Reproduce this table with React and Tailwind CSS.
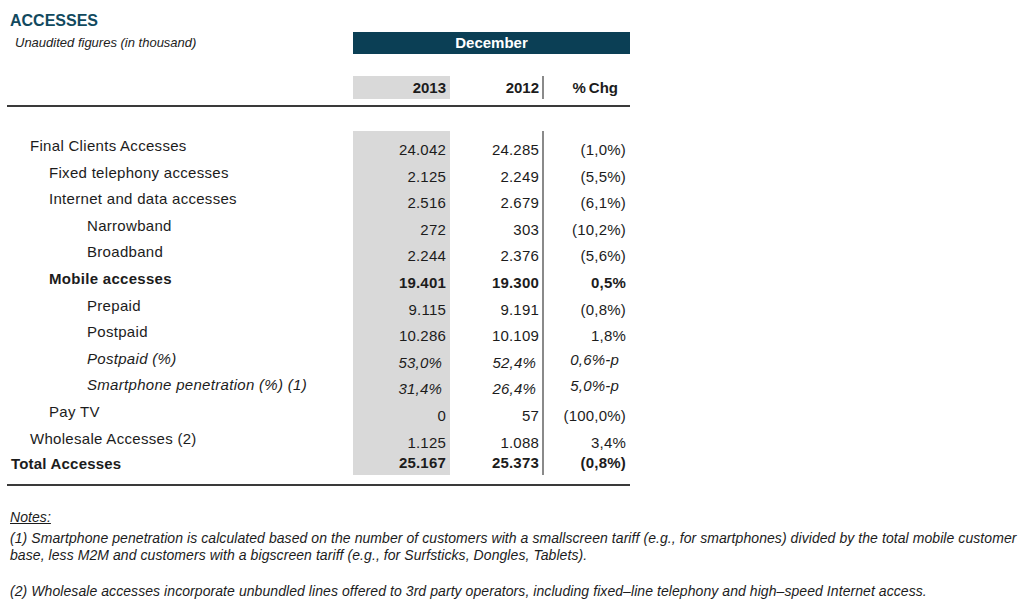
import React from "react";

const rows = [
  { label: "Final Clients Accesses", indent: 1, v: ["24.042", "24.285", "(1,0%)"] },
  { label: "Fixed telephony accesses", indent: 2, v: ["2.125", "2.249", "(5,5%)"] },
  { label: "Internet and data accesses", indent: 2, v: ["2.516", "2.679", "(6,1%)"] },
  { label: "Narrowband", indent: 3, v: ["272", "303", "(10,2%)"] },
  { label: "Broadband", indent: 3, v: ["2.244", "2.376", "(5,6%)"] },
  { label: "Mobile accesses", indent: 2, bold: true, v: ["19.401", "19.300", "0,5%"] },
  { label: "Prepaid", indent: 3, v: ["9.115", "9.191", "(0,8%)"] },
  { label: "Postpaid", indent: 3, v: ["10.286", "10.109", "1,8%"] },
  { label: "Postpaid (%)", indent: 3, italic: true, v: ["53,0%", "52,4%", "0,6%-p"] },
  { label: "Smartphone penetration (%) (1)", indent: 3, italic: true, v: ["31,4%", "26,4%", "5,0%-p"] },
  { label: "Pay TV", indent: 2, v: ["0", "57", "(100,0%)"] },
  { label: "Wholesale Accesses (2)", indent: 1, v: ["1.125", "1.088", "3,4%"] },
];

const indentCls = {
  0: "pl-[4px]",
  1: "pl-[23px]",
  2: "pl-[42px]",
  3: "pl-[80px]",
};

function Row({ r }) {
  const weight = r.bold ? "font-bold" : "font-normal";
  const style = r.italic ? "italic" : "not-italic";
  return (
    <div className="flex h-[26.6px]">
      <div className={`w-[346px] pt-[6px] leading-[18px] tracking-[0.3px] ${indentCls[r.indent]} ${weight} ${style}`}>
        {r.label}
      </div>
      <div
        className={`w-[97px] bg-[#d9d9d9] text-right leading-[18px] ${weight} ${style} ${
          r.italic ? "pt-[10px] pr-[8px]" : "pt-[10px] pr-[4px]"
        }`}
      >
        {r.v[0]}
      </div>
      <div
        className={`w-[94px] border-r-2 border-[#8a8a8a] text-right leading-[18px] ${weight} ${style} ${
          r.italic ? "pt-[10px] pr-[6px]" : "pt-[10px] pr-[3px]"
        }`}
      >
        {r.v[1]}
      </div>
      <div
        className={`w-[86px] text-right leading-[18px] ${weight} ${style} ${
          r.italic ? "pt-[7px] pr-[11px]" : "pt-[10px] pr-[4px]"
        }`}
      >
        {r.v[2]}
      </div>
    </div>
  );
}

export default function App() {
  return (
    <div
      className="w-[1024px] h-[607px] bg-white overflow-hidden text-[#1c1c1c]"
      style={{ fontFamily: '"Liberation Sans", Arial, sans-serif' }}
    >
      <div className="pl-[7px] w-[630px]">
        {/* Title */}
        <div className="pt-[12px] pl-[3px] h-[32px] text-[16px] leading-[18px] font-bold text-[#11495e]">
          ACCESSES
        </div>
        {/* Subtitle + December */}
        <div className="flex h-[22px] items-center">
          <div className="w-[346px] pl-[8px] text-[13px] italic text-[#222]">
            Unaudited figures (in thousand)
          </div>
          <div className="w-[277px] h-[22px] bg-[#0b3f55] text-white font-bold text-[15px] flex items-center justify-center">
            December
          </div>
        </div>
        {/* Header row */}
        <div className="flex h-[23px] mt-[22px] text-[15px] font-bold leading-[23px]">
          <div className="w-[346px]" />
          <div className="w-[97px] bg-[#d9d9d9] text-right pr-[4px]">2013</div>
          <div className="w-[94px] border-r-2 border-[#8a8a8a] text-right pr-[3px]">2012</div>
          <div className="w-[86px] text-right pr-[12px]">%&#8201;Chg</div>
        </div>
        <div className="mt-[6px] h-[2px] bg-[#3a3a3a]" />
        {/* Body */}
        <div className="mt-[24px] text-[15px] tracking-[0.2px]">
          {rows.map((r) => (
            <Row key={r.label} r={r} />
          ))}
          <div className="flex h-[25px] font-bold">
            <div className="w-[346px] pt-[5px] leading-[18px] pl-[4px]">Total Accesses</div>
            <div className="w-[97px] bg-[#d9d9d9] text-right pt-[4px] pr-[4px] leading-[18px]">25.167</div>
            <div className="w-[94px] border-r-2 border-[#8a8a8a] text-right pt-[4px] pr-[3px] leading-[18px]">
              25.373
            </div>
            <div className="w-[86px] text-right pt-[4px] pr-[4px] leading-[18px]">(0,8%)</div>
          </div>
        </div>
        <div className="mt-[9px] h-[2px] bg-[#3a3a3a]" />
      </div>
      {/* Notes */}
      <div className="pl-[10px] pt-[23px] text-[14px] italic leading-[17px] tracking-[0.07px] text-[#1c1c1c]">
        <div className="underline">Notes:</div>
        <div className="mt-[4px] whitespace-nowrap">
          (1) Smartphone penetration is calculated based on the number of customers with a smallscreen tariff (e.g., for smartphones) divided by the total mobile customer
        </div>
        <div className="whitespace-nowrap">
          base, less M2M and customers with a bigscreen tariff (e.g., for Surfsticks, Dongles, Tablets).
        </div>
        <div className="mt-[19px] whitespace-nowrap">
          (2) Wholesale accesses incorporate unbundled lines offered to 3rd party operators, including fixed–line telephony and high–speed Internet access.
        </div>
      </div>
    </div>
  );
}
